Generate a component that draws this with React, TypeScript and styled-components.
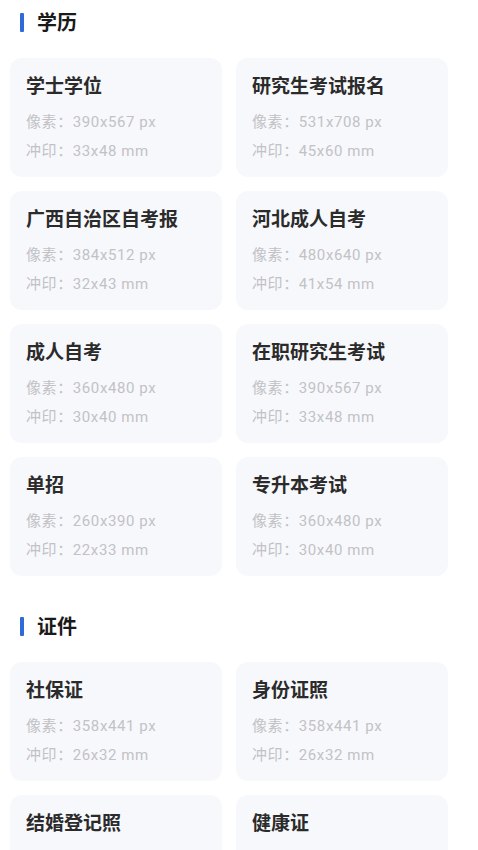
import React from 'react';
import styled, { createGlobalStyle } from 'styled-components';

const GlobalStyle = createGlobalStyle`
  body {
    margin: 0;
    background: #fff;
    font-family: "Noto Sans CJK SC", "Noto Sans", sans-serif;
  }
`;

const Page = styled.div`
  padding-top: 2px;
`;

const Section = styled.section`
  margin-bottom: 30px;
`;

const SectionHeader = styled.div`
  display: flex;
  align-items: center;
  height: 40px;
  padding-left: 20px;
  margin-bottom: 16px;
`;

const Bar = styled.span`
  width: 4px;
  height: 19px;
  background: #2f6bd6;
  border-radius: 1px;
`;

const SectionTitle = styled.h2`
  margin: 0 0 0 13px;
  font-size: 20px;
  font-weight: 700;
  color: #1a1a1a;
  line-height: 1;
`;

const Grid = styled.div`
  display: grid;
  grid-template-columns: 212px 212px;
  gap: 14px;
  padding-left: 10px;
`;

const Card = styled.div`
  background: #f7f8fb;
  border-radius: 12px;
  height: 119px;
  padding: 13px 16px 0;
  box-sizing: border-box;
`;

const CardTitle = styled.div`
  font-size: 19px;
  font-weight: 600;
  color: #2b2b2b;
  line-height: 28px;
  margin-bottom: 9px;
  white-space: nowrap;
`;

const Spec = styled.div`
  font-family: Roboto, "Noto Sans CJK SC", sans-serif;
  font-size: 15px;
  letter-spacing: 0.6px;
  color: #c2c2c6;
  line-height: 29px;
  white-space: nowrap;
`;

type Item = { name: string; px: string; mm: string };

const education: Item[] = [
  { name: '学士学位', px: '390x567', mm: '33x48' },
  { name: '研究生考试报名', px: '531x708', mm: '45x60' },
  { name: '广西自治区自考报', px: '384x512', mm: '32x43' },
  { name: '河北成人自考', px: '480x640', mm: '41x54' },
  { name: '成人自考', px: '360x480', mm: '30x40' },
  { name: '在职研究生考试', px: '390x567', mm: '33x48' },
  { name: '单招', px: '260x390', mm: '22x33' },
  { name: '专升本考试', px: '360x480', mm: '30x40' },
];

const certificates: Item[] = [
  { name: '社保证', px: '358x441', mm: '26x32' },
  { name: '身份证照', px: '358x441', mm: '26x32' },
  { name: '结婚登记照', px: '413x626', mm: '35x53' },
  { name: '健康证', px: '358x441', mm: '26x32' },
];

const SpecCard: React.FC<{ item: Item }> = ({ item }) => (
  <Card>
    <CardTitle>{item.name}</CardTitle>
    <Spec>像素：{item.px} px</Spec>
    <Spec>冲印：{item.mm} mm</Spec>
  </Card>
);

const Group: React.FC<{ title: string; items: Item[] }> = ({ title, items }) => (
  <Section>
    <SectionHeader>
      <Bar />
      <SectionTitle>{title}</SectionTitle>
    </SectionHeader>
    <Grid>
      {items.map((it) => (
        <SpecCard key={it.name} item={it} />
      ))}
    </Grid>
  </Section>
);

export default function App() {
  return (
    <Page>
      <GlobalStyle />
      <Group title="学历" items={education} />
      <Group title="证件" items={certificates} />
    </Page>
  );
}
